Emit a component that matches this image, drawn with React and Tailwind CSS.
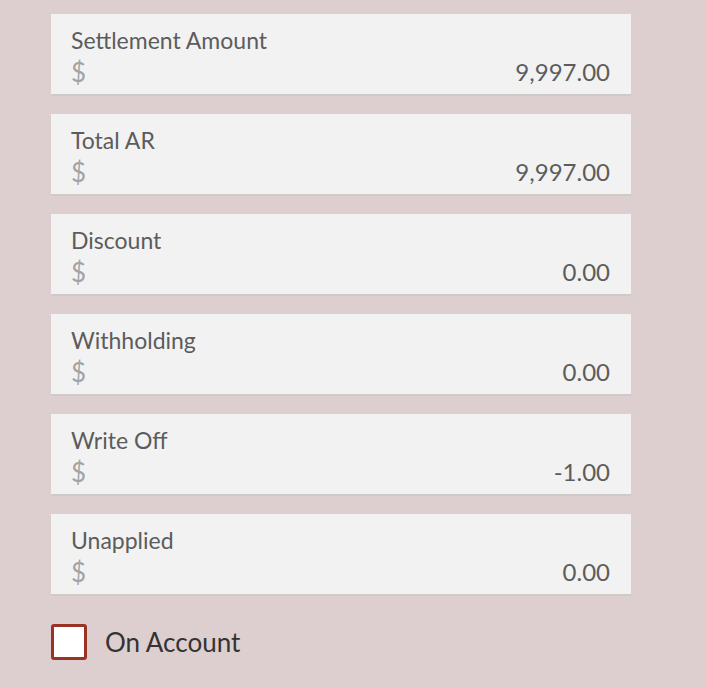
const rows = [
  { label: 'Settlement Amount', value: '9,997.00' },
  { label: 'Total AR', value: '9,997.00' },
  { label: 'Discount', value: '0.00' },
  { label: 'Withholding', value: '0.00' },
  { label: 'Write Off', value: '-1.00' },
  { label: 'Unapplied', value: '0.00' },
];

export default function App() {
  return (
    <div className="min-h-[688px] w-[706px] bg-[#ddcfcf] pl-[51px] pt-[14px]" style={{ fontFamily: 'Lato, "Open Sans", sans-serif' }}>
      <div className="flex w-[580px] flex-col gap-[18px]">
        {rows.map(row => (
          <div key={row.label} className="h-[82px] border-b-2 border-[#cfcaca] bg-[#f2f2f2] pl-[20px] pr-[21px] pt-[12px]">
            <div className="text-[23px] leading-[28px] text-[#5c5c5c]">{row.label}</div>
            <div className="mt-[2px] flex items-center justify-between">
              <span className="text-[26px] leading-[32px] text-[#a3a3a3]">$</span>
              <span className="text-[24px] leading-[32px] text-[#5c5c5c]">{row.value}</span>
            </div>
          </div>
        ))}
      </div>
      <label className="mt-[28px] flex items-center gap-[18px]">
        <span className="h-[36px] w-[36px] rounded-[3px] border-[3px] border-[#9a3324] bg-white" />
        <span className="text-[26px] leading-[36px] text-[#333]">On Account</span>
      </label>
    </div>
  );
}
